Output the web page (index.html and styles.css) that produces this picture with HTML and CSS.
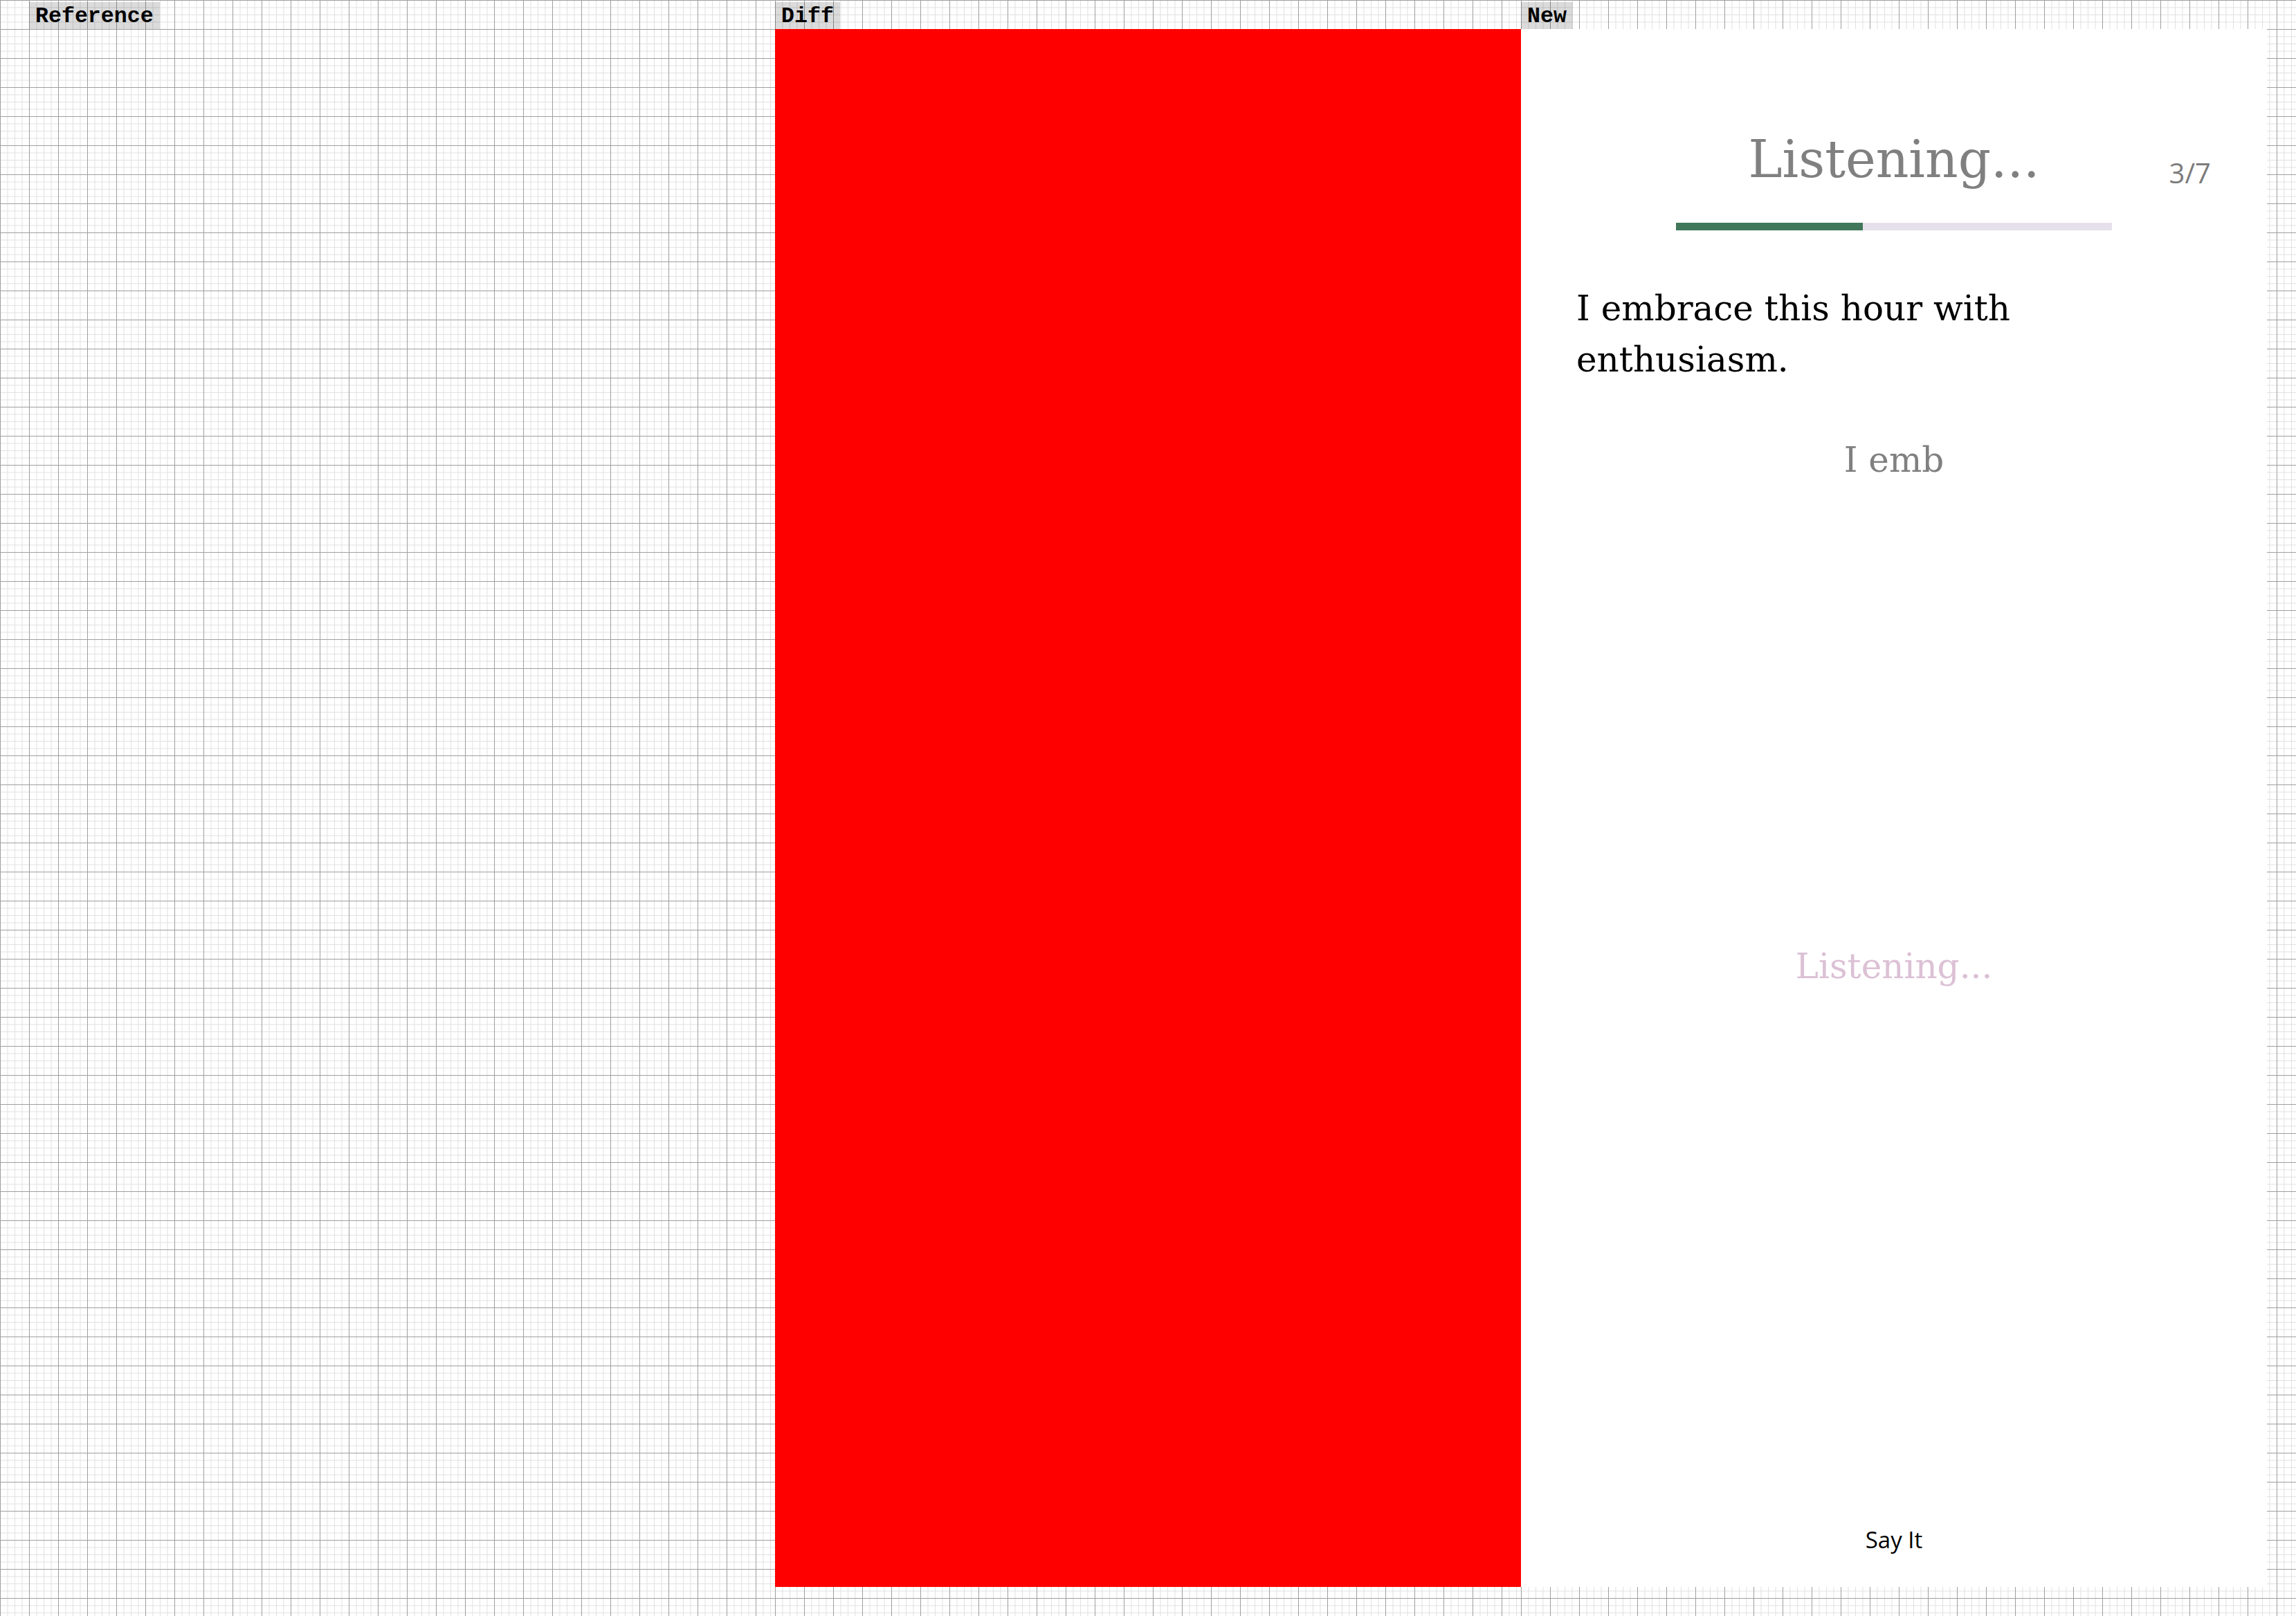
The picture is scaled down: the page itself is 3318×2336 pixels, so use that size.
FILE: index.html
```html
<!DOCTYPE html>
<html lang="en">
<head>
<meta charset="utf-8">
<title>Reference / Diff / New</title>
<link rel="stylesheet" href="styles.css">
</head>
<body>
<div class="board">
  <section class="col col-first">
    <div class="tag-row"><span class="tag">Reference</span></div>
    <div class="panel panel-empty"></div>
  </section>
  <section class="col">
    <div class="tag-row"><span class="tag">Diff</span></div>
    <div class="panel panel-diff"></div>
  </section>
  <section class="col col-last">
    <div class="tag-row"><span class="tag">New</span></div>
    <div class="panel panel-new">
      <header class="head">
        <h1 class="title">Listening...</h1>
        <span class="count">3/7</span>
      </header>
      <div class="progress"><div class="progress-fill" style="width:42.857%"></div></div>
      <p class="phrase">I embrace this hour with enthusiasm.</p>
      <p class="heard">I emb</p>
      <p class="status">Listening...</p>
      <button class="say" type="button">Say It</button>
    </div>
  </section>
</div>
</body>
</html>
```

FILE: styles.css
```css
html, body {
  margin: 0;
  padding: 0;
  background: #ffffff;
}

body {
  width: 3318px;
  height: 2336px;
  overflow: hidden;
}

.board {
  display: flex;
  width: 3318px;
  height: 2336px;
}

.col {
  width: 1078px;
  height: 2336px;
  flex: none;
  box-sizing: border-box;
  display: flex;
  flex-direction: column;
  background-color: #ffffff;
  background-image:
    linear-gradient(to right, #9f9f9f 1px, transparent 1px),
    linear-gradient(to bottom, #9f9f9f 1px, transparent 1px),
    linear-gradient(to right, #e0e0e0 1px, transparent 1px),
    linear-gradient(to bottom, #e0e0e0 1px, transparent 1px);
  background-size: 42px 42px, 42px 42px, 10.5px 10.5px, 10.5px 10.5px;
}

.col-first {
  width: 1120px;
  padding-left: 42px;
}

.col-last {
  width: 1120px;
  padding-right: 42px;
}

.tag-row {
  height: 42px;
  display: flex;
  align-items: flex-end;
}

.tag {
  display: block;
  height: 39px;
  box-sizing: border-box;
  padding: 2px 9px 0 9px;
  line-height: 37px;
  background: rgba(0, 0, 0, 0.14);
  font-family: "Liberation Mono", "Courier New", monospace;
  font-weight: bold;
  font-size: 31.6px;
  color: #000000;
}

.panel {
  height: 2252px;
  flex: none;
}

.panel-diff {
  background: #ff0000;
}

.panel-new {
  background: #ffffff;
  box-sizing: border-box;
  padding: 0 80px;
  display: flex;
  flex-direction: column;
  align-items: center;
}

.head {
  align-self: stretch;
  margin-top: 151.4px;
  display: grid;
  grid-template-columns: 1fr auto 1fr;
  align-items: start;
}

.title {
  grid-column: 2;
  margin: 0;
  font-family: "DejaVu Serif", "Liberation Serif", serif;
  font-weight: normal;
  font-size: 74px;
  line-height: 74px;
  color: #808080;
  white-space: nowrap;
}

.count {
  grid-column: 3;
  justify-self: end;
  margin-top: 36.8px;
  margin-right: 1px;
  font-family: "Open Sans", "Liberation Sans", sans-serif;
  font-size: 40px;
  line-height: 40px;
  color: #7c7c7c;
}

.progress {
  margin-top: 51.8px;
  width: 630px;
  height: 11px;
  background: #e6e0ec;
  flex: none;
}

.progress-fill {
  height: 100%;
  background: #41775a;
}

.phrase {
  align-self: flex-start;
  max-width: 780px;
  margin: 76px 0 0 0;
  font-family: "DejaVu Serif", "Liberation Serif", serif;
  font-size: 50px;
  line-height: 74px;
  color: #000000;
}

.heard {
  margin: 71.4px 0 0 0;
  font-family: "DejaVu Serif", "Liberation Serif", serif;
  font-size: 50px;
  line-height: 74px;
  color: #808080;
}

.status {
  margin: 657.3px 0 0 0;
  font-family: "DejaVu Serif", "Liberation Serif", serif;
  font-size: 50px;
  line-height: 74px;
  color: #dcc1d5;
}

.say {
  margin-top: auto;
  margin-bottom: 52px;
  padding: 0;
  border: 0;
  background: none;
  font-family: "Open Sans", "Liberation Sans", sans-serif;
  font-size: 33px;
  line-height: 33px;
  color: #000000;
  cursor: pointer;
}
```
